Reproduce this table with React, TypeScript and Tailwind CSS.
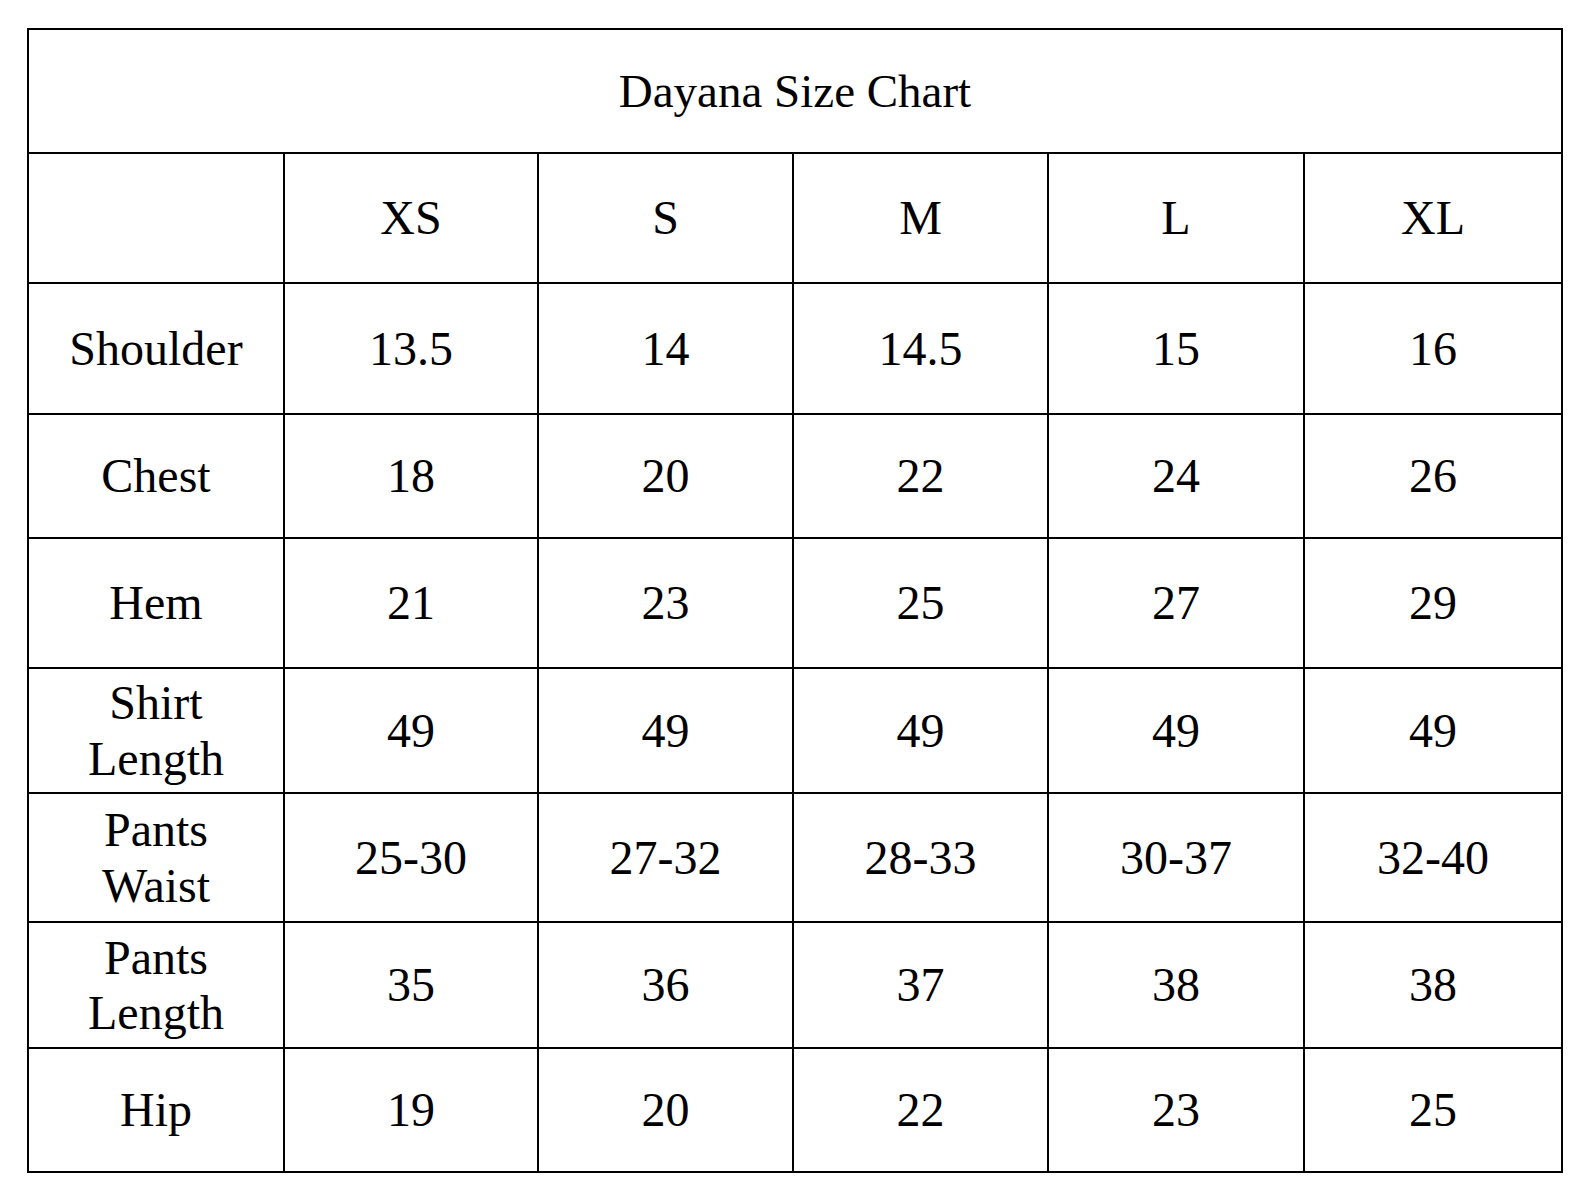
import React from 'react';

const sizes = ['XS', 'S', 'M', 'L', 'XL'];

const rows: { label: string[]; values: string[]; h: string }[] = [
  { label: ['Shoulder'], values: ['13.5', '14', '14.5', '15', '16'], h: 'h-[129px]' },
  { label: ['Chest'], values: ['18', '20', '22', '24', '26'], h: 'h-[122px]' },
  { label: ['Hem'], values: ['21', '23', '25', '27', '29'], h: 'h-[128px]' },
  { label: ['Shirt', 'Length'], values: ['49', '49', '49', '49', '49'], h: 'h-[123px]' },
  { label: ['Pants', 'Waist'], values: ['25-30', '27-32', '28-33', '30-37', '32-40'], h: 'h-[127px]' },
  { label: ['Pants', 'Length'], values: ['35', '36', '37', '38', '38'], h: 'h-[124px]' },
  { label: ['Hip'], values: ['19', '20', '22', '23', '25'], h: 'h-[122px]' },
];

function Cell({ children, className = '' }: { children?: React.ReactNode; className?: string }) {
  return (
    <div className={`bg-white flex flex-col items-center justify-center text-center leading-[1.15] ${className}`}>
      {children}
    </div>
  );
}

export default function App() {
  return (
    <div className="min-h-screen bg-white pl-[27px] pt-[28px] font-['Liberation_Serif','Times_New_Roman',serif] text-[48px] text-black">
      <div className="inline-grid grid-cols-[254px_252px_253px_253px_254px_256px] gap-[2px] bg-black p-[2px]">
        {/* title */}
        <Cell className="col-span-6 h-[122px] text-[47px]">Dayana Size Chart</Cell>

        {/* size header */}
        <Cell className="h-[128px]" />
        {sizes.map((s) => (
          <Cell key={s} className="h-[128px]">{s}</Cell>
        ))}

        {/* measurements */}
        {rows.map((r) => (
          <React.Fragment key={r.label.join(' ')}>
            <Cell className={r.h}>
              {r.label.map((l) => (
                <span key={l}>{l}</span>
              ))}
            </Cell>
            {r.values.map((v, i) => (
              <Cell key={i} className={r.h}>{v}</Cell>
            ))}
          </React.Fragment>
        ))}
      </div>
    </div>
  );
}
